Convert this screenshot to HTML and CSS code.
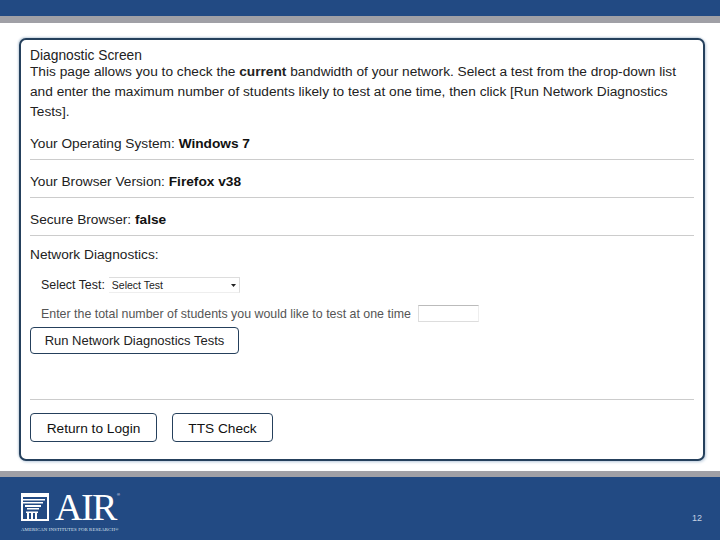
FILE: index.html
```html
<!DOCTYPE html>
<html lang="en">
<head>
<meta charset="utf-8">
<title>Diagnostic Screen</title>
<link rel="stylesheet" href="styles.css">
</head>
<body>
<div class="slide">
  <header class="top"></header>
  <main class="stage">
    <section class="card">
      <h1 class="title">Diagnostic Screen</h1>
      <p class="intro">This page allows you to check the <b>current</b> bandwidth of your network. Select a test from the drop-down list and enter the maximum number of students likely to test at one time, then click [Run Network Diagnostics Tests].</p>
      <div class="row">Your Operating System: <b>Windows 7</b></div>
      <div class="row">Your Browser Version: <b>Firefox v38</b></div>
      <div class="row">Secure Browser: <b>false</b></div>
      <div class="net-title">Network Diagnostics:</div>
      <div class="select-line">
        <span>Select Test:</span>
        <span class="fake-select"><span>Select Test</span><svg class="caret" width="5" height="3" viewBox="0 0 5 3"><path d="M0 0h5L2.500 3z" fill="#222"/></svg></span>
      </div>
      <div class="count-line">
        <span class="faint">Enter the total number of students you would like to test at one time</span>
        <span class="fake-input"></span>
      </div>
      <button class="btn btn-run">Run Network Diagnostics Tests</button>
      <div class="actions">
        <button class="btn btn-login">Return to Login</button>
        <button class="btn btn-tts">TTS Check</button>
      </div>
    </section>
  </main>
  <footer class="bottom">
    <div class="logo">
      <div class="logo-main">
        <svg class="logo-mark" width="28" height="28" viewBox="0 0 28 28">
          <rect x="1" y="1" width="26" height="26" fill="none" stroke="#fff" stroke-width="2"/>
          <path d="M1 1h26v3H1zM2 6h22v1.500H2zM2 9h20v1.500H2zM4 12h16v2H4zM6 15h12v1.500H6z" fill="#fff"/>
          <path d="M5 18.500h12v1.500H5zM6 20h2v6H6zM10 20h2v6h-2zM14 20h2v6h-2z" fill="#fff"/>
        </svg>
        <span class="logo-air">AIR</span>
        <span class="logo-reg">®</span>
      </div>
      <div class="logo-tag">AMERICAN INSTITUTES FOR RESEARCH®</div>
    </div>
    <div class="page-no">12</div>
  </footer>
</div>
</body>
</html>
```
FILE: styles.css
```css
* { box-sizing: border-box; }
html, body { margin: 0; padding: 0; }
body { background: #fff; font-family: "Liberation Sans", Arial, sans-serif; color: #222; }
.slide { width: 720px; height: 540px; display: flex; flex-direction: column; overflow: hidden; }
.top { height: 23px; flex: none; background: #224a83; border-bottom: 7px solid #a0a0a6; }
.stage { flex: 1; padding: 15px 15px 10px 19px; }
.card {
  height: 423px; background: #fff; border: 2px solid #25405c; border-radius: 7px;
  box-shadow: 1px 1px 3px #b9cadb, -1px -1px 2px #c9d5e0;
  padding: 9px 9px 0 9px; font-size: 13.700px; line-height: 16px;
}
.title { margin: 0; font-size: 13.800px; font-weight: normal; line-height: 13px; }
.intro { margin: 0; line-height: 20px; }
.row { height: 38px; padding-top: 14px; border-bottom: 1px solid #ccc; }
.row b { color: #111; }
.net-title { padding-top: 11px; height: 36px; }
.select-line { display: flex; align-items: center; gap: 4px; padding-left: 11px; height: 18px; margin-top: 4px; font-size: 12.400px; }
.fake-select {
  width: 131px; height: 16px; border-top: 1px solid #ddd; border-right: 1px solid #ddd;
  border-bottom: 1px solid #eee; font-size: 10.500px; padding: 0 3px;
  display: flex; align-items: center; justify-content: space-between;
}
.count-line { display: flex; align-items: center; gap: 7px; padding-left: 11px; margin-top: 11px; height: 17px; font-size: 12.400px; }
.faint { color: #555; white-space: nowrap; }
.fake-input { width: 61px; height: 17px; border: 1px solid #ddd; border-top-color: #bbb; border-right-color: #eee; }
.btn {
  display: block; background: #fff; border: 1px solid #25405c; border-radius: 4px;
  font-family: inherit; color: #222; padding: 0; text-align: center;
}
.btn-run { width: 209px; height: 27px; font-size: 13px; margin-top: 5px; }
.actions { display: flex; gap: 15px; margin-top: 45px; border-top: 1px solid #ccc; padding-top: 13px; }
.btn-login { width: 127px; height: 29px; font-size: 13.700px; color: #111; padding-top: 1px; }
.btn-tts { width: 101px; height: 29px; font-size: 13.700px; color: #111; padding-top: 1px; }
.bottom {
  height: 69px; flex: none; background: #224a83; border-top: 6px solid #a0a0a6;
  display: flex; justify-content: space-between; padding: 16px 18px 0 21px; color: #fff;
}
.logo { width: 100px; }
.logo-main { display: flex; align-items: flex-start; height: 28px; }
.logo-mark { flex: none; }
.logo-air { font-family: "Liberation Serif", serif; font-size: 38px; line-height: 28px; margin-left: 6px; letter-spacing: -1.500px; }
.logo-reg { font-size: 4px; line-height: 4px; margin-left: 1px; }
.logo-tag { font-family: "Liberation Serif", serif; font-size: 4.800px; letter-spacing: 0.100px; line-height: 6px; margin-top: 6px; white-space: nowrap; color: #dfe6f0; }
.page-no { font-size: 9px; color: #c5d2e3; margin-top: 19px; line-height: 12px; }
```
